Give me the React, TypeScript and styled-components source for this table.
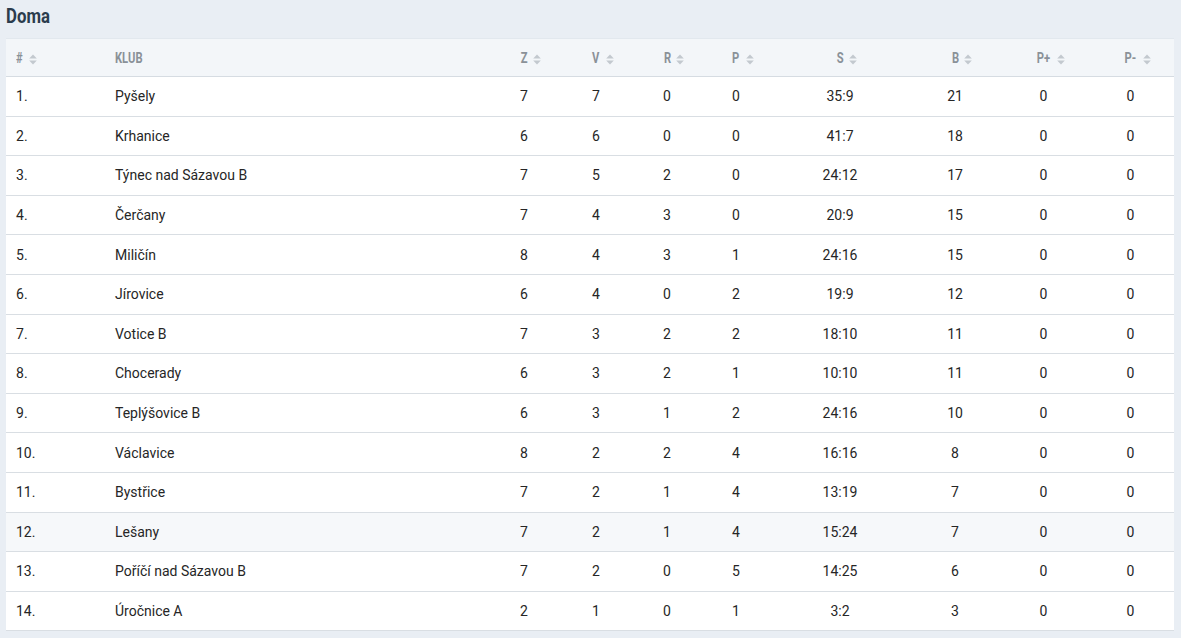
import React from "react";
import styled, { createGlobalStyle } from "styled-components";

type Row = {
	club: string;
	z: number;
	v: number;
	r: number;
	p: number;
	score: string;
	points: number;
	plus: number;
	minus: number;
};

const rows: Row[] = [
	{ club: "Pyšely", z: 7, v: 7, r: 0, p: 0, score: "35:9", points: 21, plus: 0, minus: 0 },
	{ club: "Krhanice", z: 6, v: 6, r: 0, p: 0, score: "41:7", points: 18, plus: 0, minus: 0 },
	{ club: "Týnec nad Sázavou B", z: 7, v: 5, r: 2, p: 0, score: "24:12", points: 17, plus: 0, minus: 0 },
	{ club: "Čerčany", z: 7, v: 4, r: 3, p: 0, score: "20:9", points: 15, plus: 0, minus: 0 },
	{ club: "Miličín", z: 8, v: 4, r: 3, p: 1, score: "24:16", points: 15, plus: 0, minus: 0 },
	{ club: "Jírovice", z: 6, v: 4, r: 0, p: 2, score: "19:9", points: 12, plus: 0, minus: 0 },
	{ club: "Votice B", z: 7, v: 3, r: 2, p: 2, score: "18:10", points: 11, plus: 0, minus: 0 },
	{ club: "Chocerady", z: 6, v: 3, r: 2, p: 1, score: "10:10", points: 11, plus: 0, minus: 0 },
	{ club: "Teplýšovice B", z: 6, v: 3, r: 1, p: 2, score: "24:16", points: 10, plus: 0, minus: 0 },
	{ club: "Václavice", z: 8, v: 2, r: 2, p: 4, score: "16:16", points: 8, plus: 0, minus: 0 },
	{ club: "Bystřice", z: 7, v: 2, r: 1, p: 4, score: "13:19", points: 7, plus: 0, minus: 0 },
	{ club: "Lešany", z: 7, v: 2, r: 1, p: 4, score: "15:24", points: 7, plus: 0, minus: 0 },
	{ club: "Poříčí nad Sázavou B", z: 7, v: 2, r: 0, p: 5, score: "14:25", points: 6, plus: 0, minus: 0 },
	{ club: "Úročnice A", z: 2, v: 1, r: 0, p: 1, score: "3:2", points: 3, plus: 0, minus: 0 },
];

const columns = [
	{ label: "#", width: 99, align: "left", sortable: true },
	{ label: "KLUB", width: 383, align: "left", sortable: false },
	{ label: "Z", width: 72, align: "center", sortable: true },
	{ label: "V", width: 72, align: "center", sortable: true },
	{ label: "R", width: 70, align: "center", sortable: true },
	{ label: "P", width: 68, align: "center", sortable: true },
	{ label: "S", width: 140, align: "center", sortable: true },
	{ label: "B", width: 90, align: "center", sortable: true },
	{ label: "P+", width: 87, align: "center", sortable: true },
	{ label: "P-", width: 87, align: "center", sortable: true },
];

// row under the mouse in the screenshot
const HOVER_ROW = 11;

const SortIcon = () => (
	<SortMark width="8" height="11" viewBox="0 0 8 11">
		<path d="M4 0.5 L7.8 4.6 L0.2 4.6 Z" fill="currentColor" />
		<path d="M4 10.5 L7.8 6.4 L0.2 6.4 Z" fill="currentColor" />
	</SortMark>
);

const App = () => {
	return (
		<>
			<GlobalStyle />
			<Page>
				<Title>
					<TitleText>Doma</TitleText>
				</Title>
				<Table>
					<colgroup>
						{columns.map((c) => (
							<col key={c.label} style={{ width: c.width }} />
						))}
					</colgroup>
					<thead>
						<tr>
							{columns.map((c) => (
								<HeadCell key={c.label} $align={c.align}>
									<HeadLabel>
										<HeadText $align={c.align}>{c.label}</HeadText>
										{c.sortable && <SortIcon />}
									</HeadLabel>
								</HeadCell>
							))}
						</tr>
					</thead>
					<tbody>
						{rows.map((row, i) => (
							<BodyRow key={row.club} $hover={i === HOVER_ROW}>
								<Cell $align="left">{i + 1}.</Cell>
								<Cell $align="left">{row.club}</Cell>
								<Cell>{row.z}</Cell>
								<Cell>{row.v}</Cell>
								<Cell>{row.r}</Cell>
								<Cell>{row.p}</Cell>
								<Cell>{row.score}</Cell>
								<Cell>{row.points}</Cell>
								<Cell>{row.plus}</Cell>
								<Cell>{row.minus}</Cell>
							</BodyRow>
						))}
					</tbody>
				</Table>
			</Page>
		</>
	);
};

export default App;

const GlobalStyle = createGlobalStyle`
	html, body {
		margin: 0;
		padding: 0;
		background: #e9eef4;
	}
	body {
		font-family: Roboto, "Liberation Sans", sans-serif;
	}
`;

const Page = styled.div`
	width: 1181px;
	height: 638px;
	padding: 0 7px 0 6px;
	box-sizing: border-box;
	background: #e9eef4;
	overflow: hidden;
`;

const Title = styled.h2`
	margin: 0;
	height: 38px;
	display: flex;
	align-items: center;
	padding-bottom: 6px;
	box-sizing: border-box;
	font-size: 20px;
	font-weight: 700;
	color: #2b3c4d;
`;

const TitleText = styled.span`
	display: inline-block;
	transform: scaleX(0.84);
	transform-origin: left center;
`;

const Table = styled.table`
	width: 1168px;
	table-layout: fixed;
	border-collapse: collapse;
	background: #ffffff;
	font-size: 14px;
	color: #262626;
`;

const HeadCell = styled.th<{ $align: string }>`
	height: 37px;
	padding: 0 10px;
	text-align: ${(p) => p.$align};
	background: #f3f6f9;
	border-top: 1px solid #e2e8ee;
	border-bottom: 1px solid #d6dce2;
	font-size: 14px;
	font-weight: 700;
	color: #8a9198;
	text-transform: uppercase;
	vertical-align: middle;
`;

const HeadLabel = styled.span`
	position: relative;
	display: inline-block;
`;

const HeadText = styled.span<{ $align: string }>`
	display: inline-block;
	transform: scaleX(0.8);
	transform-origin: ${(p) => (p.$align === "left" ? "left" : "center")} center;
`;

const SortMark = styled.svg`
	position: absolute;
	left: calc(100% + 5px);
	top: 4px;
	color: #c3c9cf;
`;

const BodyRow = styled.tr<{ $hover?: boolean }>`
	background: ${(p) => (p.$hover ? "#f6f8fa" : "#ffffff")};
	border-bottom: 1px solid #d9dee3;
`;

const Cell = styled.td<{ $align?: string }>`
	height: 38.6px;
	padding: 0 10px;
	text-align: ${(p) => p.$align || "center"};
	vertical-align: middle;
	white-space: nowrap;
`;
